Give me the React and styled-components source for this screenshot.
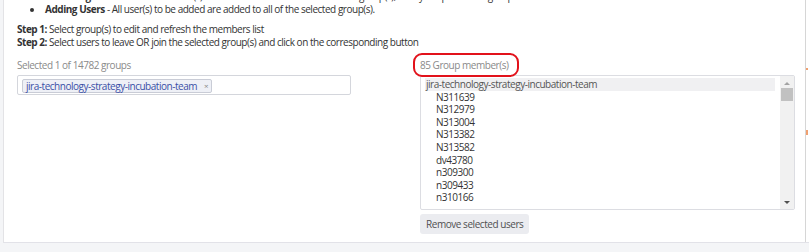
import styled, { createGlobalStyle } from "styled-components";

const GlobalStyle = createGlobalStyle`
  body {
    margin: 0;
    background: #f4f5f7;
    font-family: "Open Sans", "Noto Sans", sans-serif;
    font-size: 10px;
    color: #333;
  }
`;

const Page = styled.div`
  display: flex;
  flex-direction: column;
  height: 252px;
  overflow: hidden;
`;

const Panel = styled.div`
  height: 243px;
  margin-left: 3px;
  display: flex;
  background: #fff;
  border-left: 1px solid #e3e3e6;
  border-bottom: 1px solid #e2e2e8;
  box-sizing: border-box;
`;

const Content = styled.div`
  flex: 1;
  padding-left: 13px;
  letter-spacing: -0.47px;
`;

const Edge = styled.div`
  width: 3px;
  border-left: 1px solid #d6d6d6;
  position: relative;
`;

const Mark = styled.span`
  position: absolute;
  left: 0;
  top: ${(p) => p.$top}px;
  width: 2px;
  height: ${(p) => p.$h}px;
  background: #f0a070;
`;

const Bullets = styled.ul`
  margin: -10px 0 0;
  padding-left: 27px;
  line-height: 13px;
`;

const Bullet = styled.li`
  padding-left: 1px;
  white-space: nowrap;
`;

const Steps = styled.div`
  margin-top: 7px;
  line-height: 13px;
`;

const Columns = styled.div`
  display: grid;
  grid-template-columns: 334px 375px;
  column-gap: 69px;
  margin-top: 10px;
`;

const Column = styled.div`
  display: flex;
  flex-direction: column;
  align-items: flex-start;
`;

const Label = styled.div`
  color: #8a8a8a;
  line-height: 13px;
  margin-bottom: 3px;
  ${(p) =>
    p.$marked &&
    `
    position: relative;
    margin-bottom: 3px;
    &::after {
      content: "";
      position: absolute;
      left: -7px;
      right: -11px;
      top: -6px;
      bottom: -5px;
      border: 2.5px solid #e2121b;
      border-radius: 9px;
    }
  `}
`;

const TagInput = styled.div`
  box-sizing: border-box;
  width: 100%;
  height: 20px;
  border: 1px solid #d4d6dc;
  border-radius: 2px;
  padding: 3px 4px;
  display: flex;
  align-items: flex-start;
`;

const Tag = styled.span`
  display: inline-flex;
  align-items: center;
  height: 12px;
  padding: 0 3px;
  background: #eef0f6;
  border: 1px solid #c9ccd6;
  border-radius: 2px;
  color: #3a4fa6;
  line-height: 12px;
`;

const Remove = styled.span`
  color: #888;
  font-size: 8px;
  margin-left: 7px;
`;

const ListBox = styled.div`
  box-sizing: border-box;
  width: 100%;
  height: 135px;
  border: 1px solid #dcdde2;
  border-radius: 2px;
  display: flex;
  padding: 2px 0 0 4px;
`;

const Options = styled.div`
  flex: 1;
  line-height: 12.6px;
`;

const GroupRow = styled.div`
  background: #f0f0f2;
  color: #555;
  padding-left: 1px;
`;

const Option = styled.div`
  padding-left: 11px;
  color: #333;
`;

const ScrollBar = styled.div`
  width: 14px;
  margin: -2px 0 0 5px;
  background: #f1f1f1;
  display: flex;
  flex-direction: column;
  align-items: center;
  justify-content: space-between;
  padding: 6px 0 5px;
  box-sizing: border-box;
`;

const Thumb = styled.div`
  width: 12px;
  height: 13px;
  background: #c1c1c1;
  margin-top: 3px;
`;

const Arrow = styled.div`
  width: 0;
  height: 0;
  border-left: 3px solid transparent;
  border-right: 3px solid transparent;
  ${(p) => (p.$up ? "border-bottom: 3px solid #a3a3a3;" : "border-top: 3px solid #505050;")}
`;

const ScrollTop = styled.div`
  display: flex;
  flex-direction: column;
  align-items: center;
`;

const Button = styled.button`
  margin-top: 4px;
  height: 20px;
  padding: 0 6px;
  border: none;
  border-radius: 3px;
  background: #ebecf0;
  color: #505050;
  font-family: inherit;
  font-size: 10px;
  letter-spacing: -0.45px;
`;

const members = [
  "N311639",
  "N312979",
  "N313004",
  "N313382",
  "N313582",
  "dv43780",
  "n309300",
  "n309433",
  "n310166",
];

export default function App() {
  return (
    <Page>
      <GlobalStyle />
      <Panel>
        <Content>
          <Bullets>
            <Bullet>
              <b>Removing Users</b> - All selected user(s) are removed from all of the selected group(s), if they are part of the group.
            </Bullet>
            <Bullet>
              <b>Adding Users</b> - All user(s) to be added are added to all of the selected group(s).
            </Bullet>
          </Bullets>
          <Steps>
            <div>
              <b>Step 1:</b> Select group(s) to edit and refresh the members list
            </div>
            <div>
              <b>Step 2:</b> Select users to leave OR join the selected group(s) and click on the corresponding button
            </div>
          </Steps>
          <Columns>
            <Column>
              <Label>Selected 1 of 14782 groups</Label>
              <TagInput>
                <Tag>
                  jira-technology-strategy-incubation-team
                  <Remove>×</Remove>
                </Tag>
              </TagInput>
            </Column>
            <Column>
              <Label $marked>85 Group member(s)</Label>
              <ListBox>
                <Options>
                  <GroupRow>jira-technology-strategy-incubation-team</GroupRow>
                  {members.map((m) => (
                    <Option key={m}>{m}</Option>
                  ))}
                </Options>
                <ScrollBar>
                  <ScrollTop>
                    <Arrow $up />
                    <Thumb />
                  </ScrollTop>
                  <Arrow />
                </ScrollBar>
              </ListBox>
              <Button>Remove selected users</Button>
            </Column>
          </Columns>
        </Content>
        <Edge>
          <Mark $top={68} $h={2} />
          <Mark $top={130} $h={5} />
        </Edge>
      </Panel>
    </Page>
  );
}
